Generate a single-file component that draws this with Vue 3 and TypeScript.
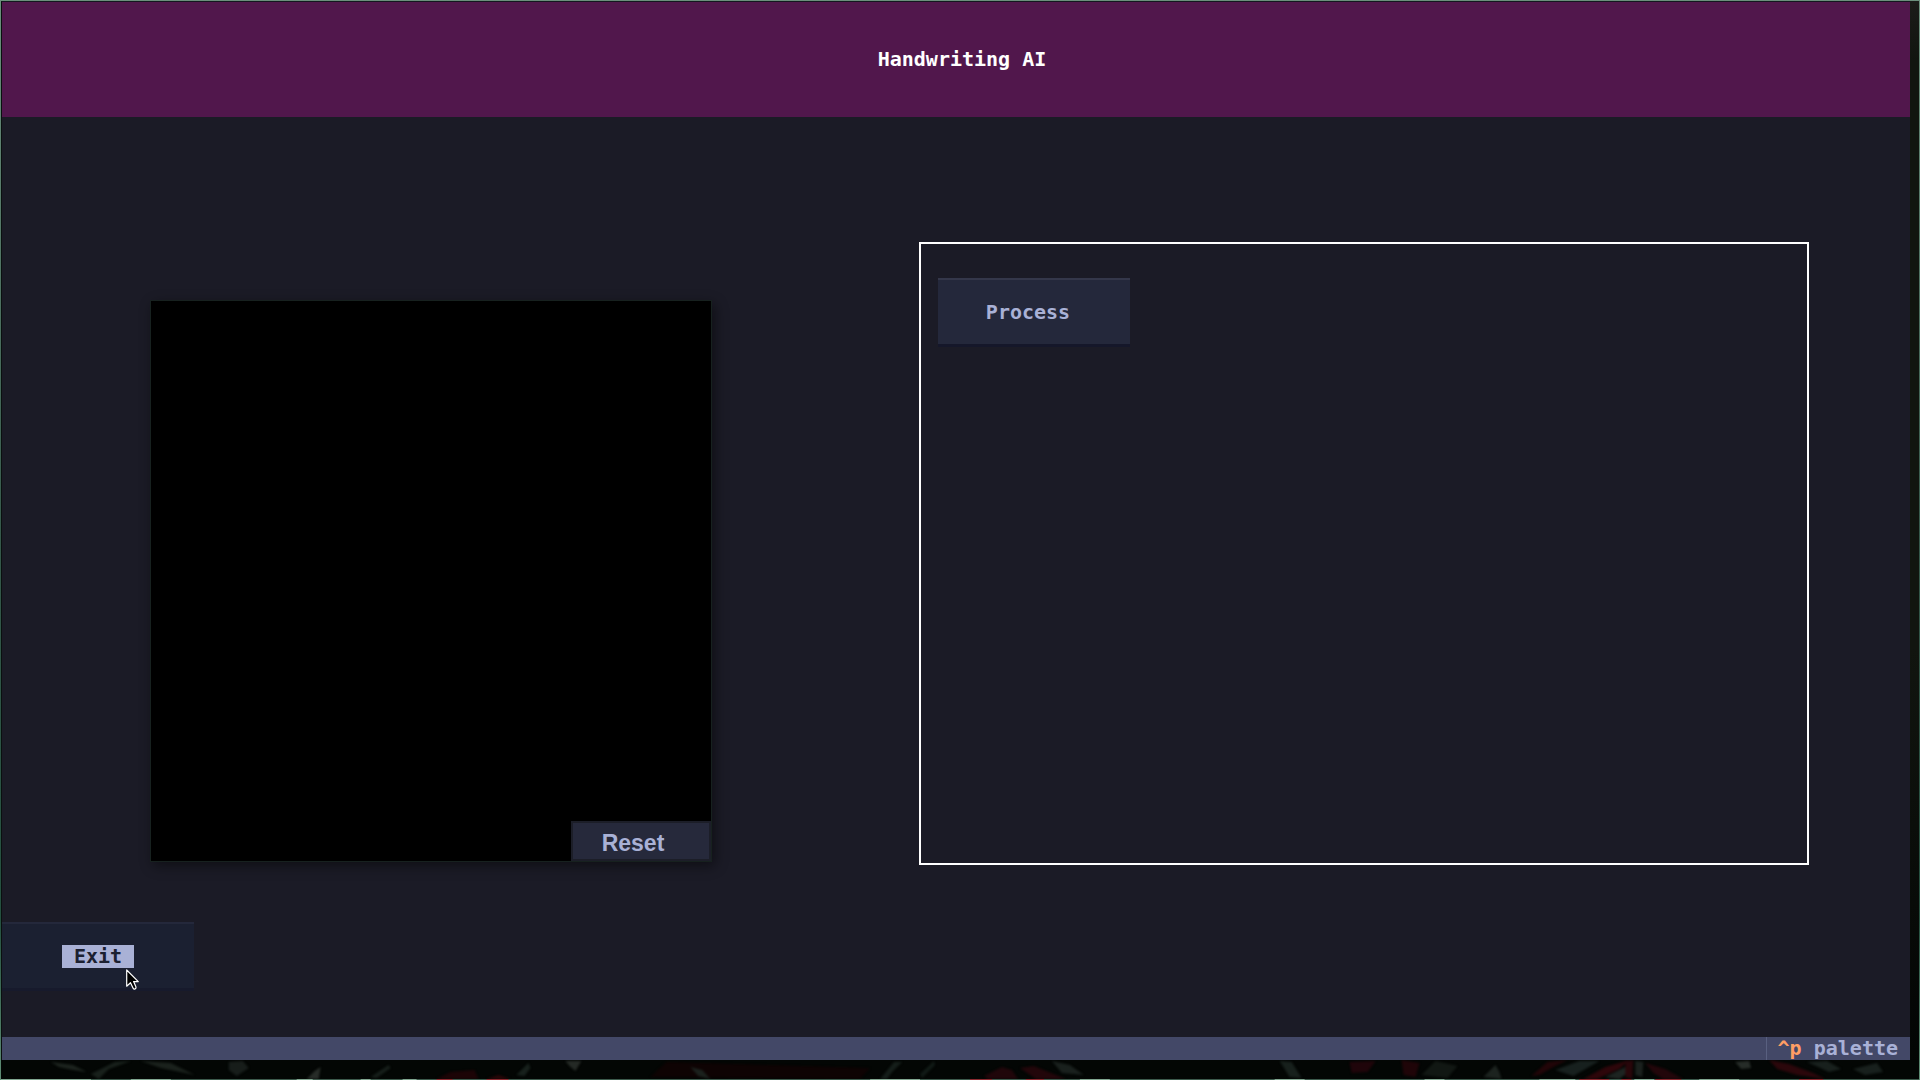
<script setup lang="ts">
import { ref } from 'vue'

interface Smudge {
  x: number
  color: string
  points: string
}

const surface = ref<HTMLCanvasElement | null>(null)

// Leaf shapes of the desktop wallpaper that shows under the window.
const smudges: Smudge[] = [
  { x: 50, color: '#1c231e', points: '0,2 22,5 36,12 22,10 8,7' },
  { x: 90, color: '#18201b', points: '0,14 24,2 40,1 18,9 8,19' },
  { x: 140, color: '#1a211c', points: '0,1 30,3 54,15 20,8' },
  { x: 228, color: '#171d1a', points: '0,2 14,1 20,8 8,16 0,10' },
  { x: 306, color: '#272c28', points: '0,19 8,11 14,7 12,19' },
  { x: 370, color: '#161e1a', points: '0,17 18,5 20,8 6,18' },
  { x: 436, color: '#1c0406', points: '0,19 14,12 38,10 42,19' },
  { x: 486, color: '#2a0608', points: '0,19 12,15 24,19' },
  { x: 516, color: '#17201c', points: '0,15 12,3 14,8 8,16' },
  { x: 565, color: '#242925', points: '0,1 16,1 10,11 4,6' },
  { x: 650, color: '#0e0303', points: '0,17 16,2 220,8 210,19' },
  { x: 690, color: '#1b211d', points: '0,7 12,10 20,19 8,16' },
  { x: 880, color: '#151e1a', points: '0,19 14,2 22,2 12,12 7,19' },
  { x: 920, color: '#111a16', points: '0,14 14,1 15,5 2,18' },
  { x: 984, color: '#20060a', points: '0,16 18,7 28,10 34,19 4,19' },
  { x: 1020, color: '#22060a', points: '0,8 14,6 46,19 16,19' },
  { x: 1052, color: '#19201d', points: '0,1 18,5 32,15 10,13' },
  { x: 1280, color: '#17201c', points: '0,1 12,2 22,18 10,17' },
  { x: 1350, color: '#1f050a', points: '0,2 26,1 18,12 2,13' },
  { x: 1402, color: '#1f0508', points: '0,0 18,3 14,17 2,15' },
  { x: 1422, color: '#111713', points: '0,15 14,1 36,6 26,18' },
  { x: 1484, color: '#1c231f', points: '0,17 12,5 16,12 18,19' },
  { x: 1532, color: '#210508', points: '0,16 16,2 36,0 22,7 8,15' },
  { x: 1556, color: '#17201e', points: '0,10 24,1 44,1 18,16' },
  { x: 1584, color: '#2d060a', points: '0,19 22,7 46,0 36,9 14,19' },
  { x: 1606, color: '#1d2421', points: '0,17 24,5 26,10 14,19' },
  { x: 1626, color: '#28060a', points: '0,2 8,0 7,19 0,17' },
  { x: 1636, color: '#1a201d', points: '0,1 8,2 7,17 0,15' },
  { x: 1646, color: '#22060a', points: '0,3 20,9 38,19 18,19 8,13' },
  { x: 1736, color: '#262c28', points: '0,2 14,1 16,8 6,9' },
  { x: 1770, color: '#2b070b', points: '0,0 20,4 44,13 56,19 28,15 8,9' },
  { x: 1808, color: '#18201d', points: '0,2 20,1 34,9 22,12' },
  { x: 1854, color: '#18201d', points: '0,9 24,3 30,12 12,15' },
]

function resetSurface(): void {
  const el = surface.value
  el?.getContext('2d')?.clearRect(0, 0, el.width, el.height)
}
</script>

<template>
  <div class="desktop">
    <div class="window">
      <header class="header">
        <h1 class="title">Handwriting AI</h1>
      </header>

      <main class="main">
        <div class="stage">
          <section class="drawing">
            <div class="pad">
              <canvas ref="surface" class="surface" width="560" height="560"></canvas>
              <button class="reset" type="button" @click="resetSurface">Reset</button>
            </div>
          </section>
          <section class="panel">
            <button class="button process" type="button">Process</button>
          </section>
        </div>

        <div class="exit-row">
          <button class="button exit" type="button"><span class="exit-label">Exit</span></button>
          <svg class="cursor" width="14" height="22" viewBox="0 0 14 22" aria-hidden="true">
            <path
              d="M.7 1v16.2l3.8-3.5 2.4 5.1q.8 1.8 2.2 1.1t.8-2.2L7.6 12.6h4.7z"
              fill="#000"
              stroke="#fff"
              stroke-width="1.2"
              stroke-linejoin="round"
            />
          </svg>
        </div>
      </main>

      <footer class="footer">
        <button class="palette" type="button"><span class="key">^p</span> palette</button>
      </footer>
    </div>

    <svg class="wallpaper" viewBox="0 0 1920 20" preserveAspectRatio="none" aria-hidden="true">
      <g class="leaves">
        <polygon
          v-for="s in smudges"
          :key="s.x"
          :points="s.points"
          :fill="s.color"
          :transform="`translate(${s.x} 0)`"
        />
      </g>
      <rect x="0" y="19" width="1920" height="1" fill="#3c5a4c" />
      <path
        d="M0 19.5h90M130 19.5h40M296 19.5h16M360 19.5h10M402 19.5h14M870 19.5h50M1080 19.5h30M1275 19.5h30M1425 19.5h20M1540 19.5h36M1635 19.5h20M1700 19.5h40"
        stroke="#82a892"
      />
      <path
        d="M436 19.5h16M486 19.5h22M970 19.5h22M1026 19.5h18M1580 19.5h30M1622 19.5h10M1656 19.5h26M1800 19.5h24"
        stroke="#8c2a30"
      />
    </svg>
  </div>
</template>

<style>
body {
  margin: 0;
  background: #020403;
}
</style>

<style scoped>
.desktop {
  box-sizing: border-box;
  display: flex;
  flex-direction: column;
  min-height: 100vh;
  border-left: 1px solid;
  border-top: 1px solid #5e8470;
  border-right: 1px solid #4c6a58;
  border-image: linear-gradient(#6b8f7c, #35584a 50%, #24503f 85%, #5f8d75) 1;
  border-bottom: 0;
  background: linear-gradient(#1b1c19, #11150f 60px, #11150f 60%, #020403);
  font-family: "DejaVu Sans Mono", "Liberation Mono", monospace;
  font-size: 20px;
  font-weight: 700;
  line-height: 23px;
  color: #a9b1d6;
}

.window {
  flex: 1;
  display: flex;
  flex-direction: column;
  margin-right: 9px;
  border-top: 1px solid #14171f;
  border-left: 1px solid #0a100f;
  background: #1b1b26;
}

.header {
  padding: 46px 0;
  background: #51174c;
}

.title {
  margin: 0;
  padding-left: 12px;
  font-size: 20px;
  line-height: 23px;
  text-align: center;
  color: #fff;
}

.main {
  flex: 1;
  display: flex;
  flex-direction: column;
  padding-bottom: 46px;
}

.stage {
  flex: 1;
  display: grid;
  grid-template-columns: 917fr 991fr;
  padding: 125px 0 57px;
}

.drawing {
  padding: 58px 0 0 148px;
}

.pad {
  position: relative;
  width: 560px;
  border: 1px solid #17211f;
  box-shadow: 3px 4px 12px rgba(0, 0, 0, 0.45);
}

.surface {
  display: block;
  width: 100%;
  background: #000;
}

.reset {
  position: absolute;
  right: 0;
  bottom: 0;
  width: 140px;
  height: 40px;
  padding: 3px 16px 0 0;
  border: 2px solid #1c1e28;
  background: #26293b;
  font: 700 23px/32px "Liberation Sans", Arial, sans-serif;
  color: #a9b1d6;
}

.panel {
  margin-right: 101px;
  padding: 34px 17px;
  border: 2px solid #fff;
}

.button {
  display: block;
  box-sizing: border-box;
  width: 192px;
  height: 69px;
  padding: 0 12px 0 0;
  border: 0;
  border-top: 2px solid #34374a;
  border-bottom: 3px solid #15172a;
  background: #24283b;
  font: inherit;
  color: #a9b1d6;
}

.exit-row {
  position: relative;
}

.exit {
  padding: 0;
  border-top-color: #24283b;
  border-bottom-color: #171a2c;
  background: #1b2031;
}

.exit-label {
  display: inline-block;
  padding: 0 12px;
  background: #a9b1d6;
  color: #1b2031;
}

.cursor {
  position: absolute;
  left: 124px;
  top: 47px;
}

.footer {
  display: flex;
  justify-content: flex-end;
  background: #434867;
}

.palette {
  height: 23px;
  padding: 0 12px 0 11px;
  border: 0;
  border-left: 1px solid #596080;
  background: none;
  font: inherit;
  color: #a9b1d6;
}

.key {
  color: #ff9e64;
}

.wallpaper {
  display: block;
  width: 100%;
  height: 20px;
  background: #030604;
}

.leaves {
  filter: blur(1px);
}
</style>
